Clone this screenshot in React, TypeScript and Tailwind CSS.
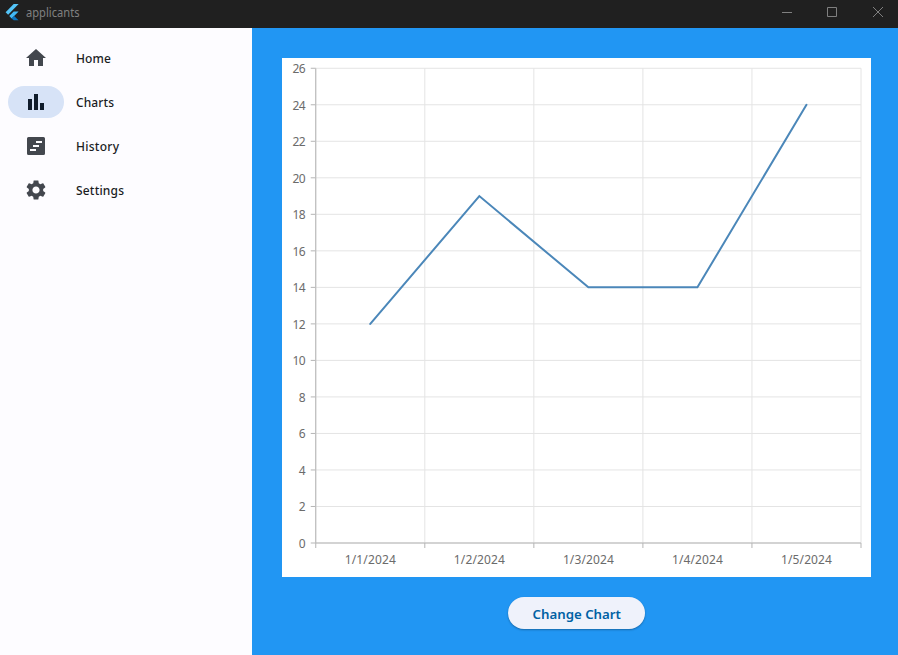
import type { ReactNode } from "react";

const Icon = ({ children }: { children: ReactNode }) => (
  <svg viewBox="0 0 24 24" className="size-6" fill="currentColor">
    {children}
  </svg>
);

const items = [
  { label: "Home", width: 35, icon: <path d="M10 20v-6h4v6h5v-8h3L12 3 2 12h3v8z" /> },
  { label: "Charts", width: 38, icon: <path d="M4 9h4v11H4zm12 4h4v7h-4zm-6-9h4v16h-4z" /> },
  {
    label: "History",
    width: 43,
    icon: (
      <path
        fillRule="evenodd"
        d="M4.5 3h15A1.5 1.5 0 0 1 21 4.5v15a1.5 1.5 0 0 1-1.5 1.5h-15A1.5 1.5 0 0 1 3 19.5v-15A1.5 1.5 0 0 1 4.5 3zM12 7v2h6V7zM9 11v2h6v-2zM6 15v2h6v-2z"
      />
    ),
  },
  {
    label: "Settings",
    width: 48,
    icon: (
      <path d="M19.14 12.94c.04-.3.06-.61.06-.94 0-.32-.02-.64-.07-.94l2.03-1.58c.18-.14.23-.41.12-.61l-1.92-3.32c-.12-.22-.37-.29-.59-.22l-2.39.96c-.5-.38-1.03-.7-1.62-.94l-.36-2.54c-.04-.24-.24-.41-.48-.41h-3.84c-.24 0-.43.17-.47.41l-.36 2.54c-.59.24-1.13.57-1.62.94l-2.39-.96c-.22-.08-.47 0-.59.22L2.74 8.87c-.12.21-.08.47.12.61l2.03 1.58c-.05.3-.09.63-.09.94s.02.64.07.94l-2.03 1.58c-.18.14-.23.41-.12.61l1.92 3.32c.12.22.37.29.59.22l2.39-.96c.5.38 1.03.7 1.62.94l.36 2.54c.05.24.24.41.48.41h3.84c.24 0 .44-.17.47-.41l.36-2.54c.59-.24 1.13-.56 1.62-.94l2.39.96c.22.08.47 0 .59-.22l1.92-3.32c.12-.22.07-.47-.12-.61l-2.01-1.58zM12 15.6c-1.98 0-3.6-1.62-3.6-3.6s1.62-3.6 3.6-3.6 3.6 1.62 3.6 3.6-1.62 3.6-3.6 3.6z" />
    ),
  },
];

const LEFT = 33.75;
const RIGHT = 579;
const TOP = 10.25;
const BOTTOM = 485;
const data = [
  { date: "1/1/2024", value: 12 },
  { date: "1/2/2024", value: 19 },
  { date: "1/3/2024", value: 14 },
  { date: "1/4/2024", value: 14 },
  { date: "1/5/2024", value: 24 },
];
const ticks = Array.from({ length: 14 }, (_, i) => i * 2);
const step = (RIGHT - LEFT) / data.length;
const yOf = (v: number) => BOTTOM - (v / 26) * (BOTTOM - TOP);
const xOf = (i: number) => LEFT + (i + 0.5) * step;

function LineChart() {
  return (
    <svg width="589" height="519" className="block bg-white text-[12px]" fill="#6b6b6b">
      {ticks.map((t) => (
        <g key={t}>
          <line x1={LEFT} x2={RIGHT} y1={yOf(t)} y2={yOf(t)} stroke="#e4e4e4" />
          <line x1={LEFT - 5} x2={LEFT} y1={yOf(t)} y2={yOf(t)} stroke="#b5b5b5" />
          <text x="23.5" y={yOf(t) + 5} textAnchor="end" textLength={t < 10 ? 6.5 : 13}>
            {t}
          </text>
        </g>
      ))}
      {[0, 1, 2, 3, 4, 5].map((i) => (
        <g key={i}>
          <line x1={LEFT + i * step} x2={LEFT + i * step} y1={TOP} y2={BOTTOM} stroke="#e4e4e4" />
          <line x1={LEFT + i * step} x2={LEFT + i * step} y1={BOTTOM} y2={BOTTOM + 5} stroke="#b5b5b5" />
        </g>
      ))}
      <path d={`M${LEFT} ${TOP}V${BOTTOM}H${RIGHT}`} fill="none" stroke="#b5b5b5" />
      {data.map((d, i) => (
        <text key={d.date} x={xOf(i)} y="506" textAnchor="middle" textLength="51">
          {d.date}
        </text>
      ))}
      <polyline
        points={data.map((d, i) => `${xOf(i)},${yOf(d.value)}`).join(" ")}
        fill="none"
        stroke="#4b87b9"
        strokeWidth="2"
        strokeLinecap="round"
      />
    </svg>
  );
}

export default function App() {
  return (
    <div className="flex h-[655px] w-[898px] flex-col overflow-hidden font-['Noto_Sans',sans-serif]">
      <header className="flex h-7 shrink-0 items-start bg-[#202020] text-[#808080]">
        <svg viewBox="0 0 14 17" width="14" height="17" className="mt-1 ml-[5px]">
          <path d="M8.7 0H13.6L3.1 10.7.6 8.2z" fill="#54c5f8" />
          <path d="M8.7 7.4H13.6L9.1 11.9 6.7 14.4 4.2 11.9z" fill="#42b9f5" />
          <path d="m6.7 14.4 2.4-2.5 4.5 4.4H8.7z" fill="#0b74bf" />
        </svg>
        <svg width="80" height="28" className="ml-[7px] text-[12px]" fill="currentColor">
          <text x="0" y="17" textLength="53.5" lengthAdjust="spacingAndGlyphs">applicants</text>
        </svg>
        <svg width="116" height="28" className="ml-auto" fill="none" stroke="currentColor">
          <path d="M0 12.5h10M45.5 7.5h9v9h-9zM91 7l10 10M101 7 91 17" />
        </svg>
      </header>
      <div className="flex min-h-0 flex-1">
        <nav className="flex w-[252px] shrink-0 flex-col gap-3 bg-[#fdfcff] px-2 pt-[14px]">
          {items.map((item) => {
            const active = item.label === "Charts";
            return (
              <button key={item.label} className="flex h-8 items-center gap-3 text-left">
                <span
                  className={`flex h-8 w-14 items-center justify-center rounded-full ${
                    active ? "bg-[#d7e3f7] text-[#101c2b]" : "text-[#43474e]"
                  }`}
                >
                  <Icon>{item.icon}</Icon>
                </span>
                <svg width="80" height="32" className="text-[12px] font-medium" fill="#1a1c1e">
                  <text x="0" y="21" textLength={item.width}>{item.label}</text>
                </svg>
              </button>
            );
          })}
        </nav>
        <main className="flex flex-1 flex-col items-start bg-[#2196f3] pt-[30px] pl-[30px]">
          <LineChart />
          <button className="mt-5 ml-[226px] flex h-8 w-[137px] items-center justify-center rounded-full bg-[#eff2fb] shadow-[0_1px_2px_rgba(0,0,0,0.3)]">
            <svg width="89" height="32" className="overflow-visible text-[13px] font-semibold" fill="#0061a4">
              <text x="0.5" y="22" textLength="88.5" lengthAdjust="spacingAndGlyphs">Change Chart</text>
            </svg>
          </button>
        </main>
      </div>
    </div>
  );
}
